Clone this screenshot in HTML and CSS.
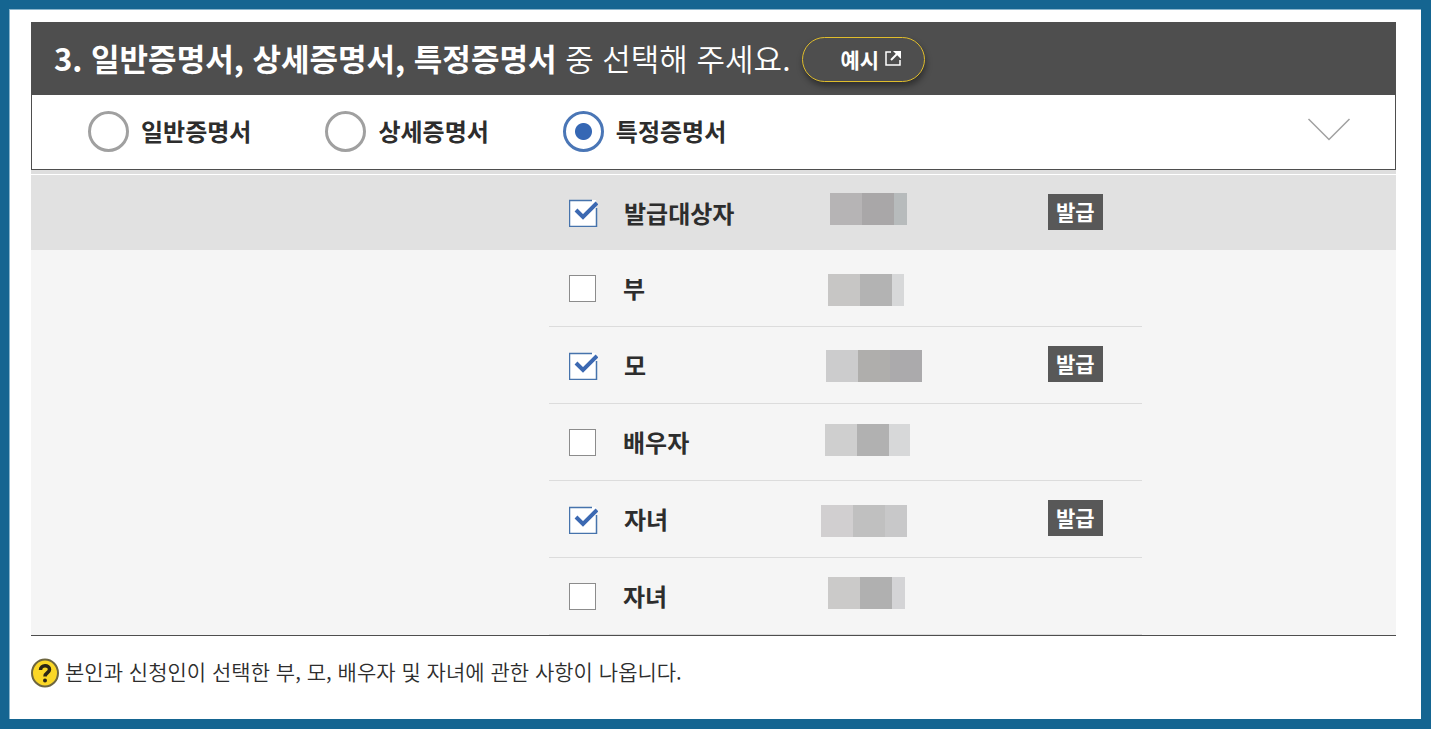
FILE: index.html
```html
<!DOCTYPE html>
<html lang="ko">
<head>
    <meta charset="UTF-8">
    <meta name="viewport" content="width=device-width, initial-scale=1.0">
    <title>증명서 선택</title>
    <link rel="stylesheet" href="styles.css">
</head>
<body>
    <main>
        <header class="title-bar">
            <h1><strong>3. 일반증명서, 상세증명서, 특정증명서</strong> 중 선택해 주세요.</h1>
            <button type="button" class="example-button">
                예시
                <svg width="17" height="17" viewBox="0 0 17 17" fill="none" stroke="#fff" stroke-width="2" aria-hidden="true">
                    <path d="M6 2H1V15H15V10" stroke-width="1.5"/>
                    <path d="M6 10L14 2"/>
                    <path d="M8 1H16V9Z" fill="#fff" stroke="none"/>
                </svg>
            </button>
        </header>

        <section class="type-bar">
            <label class="radio"><input type="radio" name="type">일반증명서</label>
            <label class="radio"><input type="radio" name="type">상세증명서</label>
            <label class="radio"><input type="radio" name="type" checked>특정증명서</label>
            <button type="button" class="toggle" aria-label="펼치기">
                <svg width="44" height="24" viewBox="0 0 44 24" fill="none" stroke="#a0a0a0" stroke-width="1.5" aria-hidden="true">
                    <path d="M1.5 2L22 22.5L42.5 2"/>
                </svg>
            </button>
        </section>

        <ul class="people">
            <li class="person target">
                <div class="row">
                    <label class="name">
                        <span class="check">
                            <input type="checkbox" checked>
                            <svg class="mark" width="29" height="28" viewBox="0 0 29 28" aria-hidden="true"><path class="frame" d="M23 1.5H.5V27.5H27.5V9"/><path class="tick" d="M7 11L14 18L28 4"/></svg>
                        </span>
                        발급대상자
                    </label>
                    <svg class="mask" width="110" height="75" viewBox="0 0 110 75" aria-hidden="true">
                        <rect x="10" y="18" width="32" height="32" fill="#b6b4b5"/>
                        <rect x="42" y="18" width="32" height="32" fill="#a9a7a8"/>
                        <rect x="74" y="18" width="13" height="32" fill="#b7bbbc"/>
                    </svg>
                    <span class="badge">발급</span>
                </div>
            </li>
            <li class="person">
                <div class="row">
                    <label class="name"><span class="check"><input type="checkbox"></span>부</label>
                    <svg class="mask" width="110" height="76" viewBox="0 0 110 76" aria-hidden="true">
                        <rect x="8" y="24" width="32" height="32" fill="#c7c6c5"/>
                        <rect x="40" y="24" width="32" height="32" fill="#b3b3b3"/>
                        <rect x="72" y="24" width="12" height="32" fill="#d7d8d9"/>
                    </svg>
                </div>
            </li>
            <li class="person">
                <div class="row">
                    <label class="name">
                        <span class="check">
                            <input type="checkbox" checked>
                            <svg class="mark" width="29" height="28" viewBox="0 0 29 28" aria-hidden="true"><path class="frame" d="M23 1.5H.5V27.5H27.5V9"/><path class="tick" d="M7 11L14 18L28 4"/></svg>
                        </span>
                        모
                    </label>
                    <svg class="mask" width="110" height="76" viewBox="0 0 110 76" aria-hidden="true">
                        <rect x="6" y="23" width="32" height="32" fill="#cccccd"/>
                        <rect x="38" y="23" width="32" height="32" fill="#afaeac"/>
                        <rect x="70" y="23" width="32" height="32" fill="#abaaac"/>
                    </svg>
                    <span class="badge">발급</span>
                </div>
            </li>
            <li class="person">
                <div class="row">
                    <label class="name"><span class="check"><input type="checkbox"></span>배우자</label>
                    <svg class="mask" width="110" height="76" viewBox="0 0 110 76" aria-hidden="true">
                        <rect x="5" y="20" width="32" height="32" fill="#cfcfcf"/>
                        <rect x="37" y="20" width="32" height="32" fill="#b1b1b1"/>
                        <rect x="69" y="20" width="21" height="32" fill="#d7d8d9"/>
                    </svg>
                </div>
            </li>
            <li class="person">
                <div class="row">
                    <label class="name">
                        <span class="check">
                            <input type="checkbox" checked>
                            <svg class="mark" width="29" height="28" viewBox="0 0 29 28" aria-hidden="true"><path class="frame" d="M23 1.5H.5V27.5H27.5V9"/><path class="tick" d="M7 11L14 18L28 4"/></svg>
                        </span>
                        자녀
                    </label>
                    <svg class="mask" width="110" height="76" viewBox="0 0 110 76" aria-hidden="true">
                        <rect x="1" y="24" width="32" height="32" fill="#d1cfd0"/>
                        <rect x="33" y="24" width="32" height="32" fill="#c0c0c0"/>
                        <rect x="65" y="24" width="22" height="32" fill="#c8c8c9"/>
                    </svg>
                    <span class="badge">발급</span>
                </div>
            </li>
            <li class="person">
                <div class="row">
                    <label class="name"><span class="check"><input type="checkbox"></span>자녀</label>
                    <svg class="mask" width="110" height="76" viewBox="0 0 110 76" aria-hidden="true">
                        <rect x="8" y="19" width="32" height="32" fill="#cbcac9"/>
                        <rect x="40" y="19" width="32" height="32" fill="#b0b0b0"/>
                        <rect x="72" y="19" width="13" height="32" fill="#d4d4d6"/>
                    </svg>
                </div>
            </li>
        </ul>

        <div class="help">
            <svg width="28" height="30" viewBox="0 0 28 30" aria-hidden="true">
                <ellipse cx="14" cy="15" rx="13" ry="13.5" fill="#fbd726" stroke="#6e6640" stroke-width="2"/>
                <path d="M9.5 12C9.5 6.5 18.5 6.5 18.5 11.5C18.5 15 14 14.5 14 18.5" fill="none" stroke="#2b2516" stroke-width="3.5"/>
                <circle cx="14" cy="22.5" r="2" fill="#2b2516"/>
            </svg>
            <p>본인과 신청인이 선택한 부, 모, 배우자 및 자녀에 관한 사항이 나옵니다.</p>
        </div>
    </main>
</body>
</html>
```
FILE: styles.css
```css
* {
    box-sizing: border-box;
}

body {
    margin: 0;
    min-height: 100vh;
    border: 10px solid #156591;
    border-width: 9px 10px 10px 9px;
    background-color: #fff;
    color: #2d2d2d;
    font-family: "Noto Sans CJK KR", sans-serif;
    box-shadow: inset 1px 1px 0 #8ab5cc;
}

main {
    padding: 13px 25px 24px 22px;
}

button {
    font-family: inherit;
    cursor: pointer;
}

svg {
    display: block;
}

/* 제목 */
.title-bar {
    display: flex;
    align-items: center;
    gap: 11px;
    min-height: 73px;
    padding: 0 23px;
    background-color: #4e4e4e;
    color: #fff;
}

.title-bar h1 {
    margin: 0;
    padding-bottom: 2px;
    font-size: 31px;
    line-height: 46px;
    font-weight: 350;
}

.title-bar strong {
    font-weight: 700;
}

.example-button {
    display: flex;
    align-items: center;
    gap: 6px;
    height: 45px;
    margin-top: 2px;
    padding: 0 22px 2px 38px;
    border: 1px solid #e0bd2c;
    border-radius: 23px;
    background-color: #4e4e4e;
    color: #fff;
    font-size: 21px;
    font-weight: 700;
    box-shadow: 1px 4px 6px rgba(0, 0, 0, 0.4);
}

/* 증명서 종류 */
.type-bar {
    display: flex;
    align-items: center;
    gap: 74px;
    min-height: 75px;
    padding: 0 44px 0 56px;
    border: 1px solid #4e4e4e;
    border-top: 0;
}

.radio {
    display: flex;
    align-items: center;
    gap: 12px;
    padding-bottom: 2px;
    font-size: 24px;
    line-height: 36px;
    font-weight: 700;
}

.radio input {
    appearance: none;
    width: 41px;
    height: 41px;
    margin: 0;
    border: 3px solid #a0a0a0;
    border-radius: 50%;
    background-color: #fff;
}

.radio input:checked {
    border-color: #4a76b6;
    background: radial-gradient(circle, #3567b4 8px, #fff 9px);
}

.toggle {
    margin-left: auto;
    padding: 0 0 6px;
    border: 0;
    background: none;
}

/* 대상자 목록 */
.people {
    margin: 0;
    padding: 4px 0 0;
    border-bottom: 1px solid #4e4e4e;
    background-color: #f5f5f5;
    background-image: linear-gradient(#dedede, #dedede);
    background-size: 100% 4px;
    background-repeat: no-repeat;
    list-style: none;
}

.person {
    padding-left: 37.95%;
}

.target {
    border-top: 1px solid #fff;
    background-color: #e1e1e1;
}

.row {
    display: grid;
    grid-template-columns: 251px 228px auto;
    align-items: center;
    justify-content: start;
    max-width: 593px;
    padding-left: 20px;
    border-bottom: 1px solid #dcdcdc;
}

.target .row {
    border-bottom: 0;
}

.name {
    display: flex;
    align-items: center;
    gap: 27px;
    font-size: 24px;
    line-height: 36px;
    font-weight: 700;
}

.check {
    display: grid;
    padding-top: 1px;
}

.check input,
.mark {
    grid-area: 1 / 1;
}

.check input {
    appearance: none;
    width: 27px;
    height: 27px;
    margin: 0;
    border: 1px solid #8c8c8c;
    background-color: #fff;
}

.check input:checked {
    width: 28px;
    height: 28px;
    border-color: transparent;
    background-clip: padding-box;
}

.mark {
    margin-right: -1px;
    fill: none;
    pointer-events: none;
}

.frame {
    stroke: #4673ac;
    stroke-width: 1.5;
}

.tick {
    stroke: #3c69b2;
    stroke-width: 4;
}

.badge {
    margin-bottom: 2px;
    padding: 0 8px 2px;
    background-color: #585858;
    color: #fff;
    font-size: 21px;
    line-height: 34px;
    font-weight: 700;
}

/* 안내 문구 */
.help {
    display: flex;
    align-items: center;
    gap: 6px;
    margin-top: 21px;
    font-size: 21px;
    line-height: 28px;
    font-weight: 350;
}

.help p {
    margin: 0;
    padding-bottom: 4px;
}
```
